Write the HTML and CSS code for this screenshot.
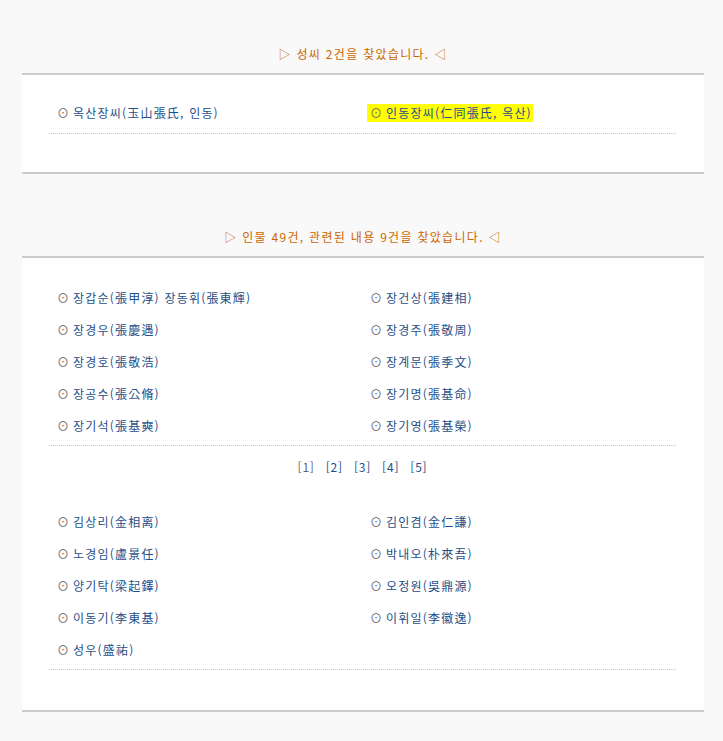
FILE: index.html
```html
<!DOCTYPE html>
<html lang="ko">
<head>
    <meta charset="UTF-8">
    <meta name="viewport" content="width=device-width, initial-scale=1.0">
    <title>검색 결과</title>
    <link rel="stylesheet" href="styles.css">
</head>
<body>
    <div class="wrap">
        <!-- 성씨 결과 -->
        <section class="result">
            <h2 class="result-title">▷ 성씨 2건을 찾았습니다. ◁</h2>
            <div class="panel">
                <ul class="list">
                    <li><a href="#"><span class="dot">⊙</span>옥산장씨(玉山張氏, 인동)</a></li>
                    <li><a href="#" class="hl"><span class="dot">⊙</span>인동장씨(仁同張氏, 옥산)</a></li>
                </ul>
            </div>
        </section>

        <!-- 인물 결과 -->
        <section class="result second">
            <h2 class="result-title">▷ 인물 49건, 관련된 내용 9건을 찾았습니다. ◁</h2>
            <div class="panel">
                <ul class="list">
                    <li><a href="#"><span class="dot">⊙</span>장갑순(張甲淳) 장동휘(張東輝)</a></li>
                    <li><a href="#"><span class="dot">⊙</span>장건상(張建相)</a></li>
                    <li><a href="#"><span class="dot">⊙</span>장경우(張慶遇)</a></li>
                    <li><a href="#"><span class="dot">⊙</span>장경주(張敬周)</a></li>
                    <li><a href="#"><span class="dot">⊙</span>장경호(張敬浩)</a></li>
                    <li><a href="#"><span class="dot">⊙</span>장계문(張季文)</a></li>
                    <li><a href="#"><span class="dot">⊙</span>장공수(張公脩)</a></li>
                    <li><a href="#"><span class="dot">⊙</span>장기명(張基命)</a></li>
                    <li><a href="#"><span class="dot">⊙</span>장기석(張基奭)</a></li>
                    <li><a href="#"><span class="dot">⊙</span>장기영(張基榮)</a></li>
                </ul>
                <div class="paging">
                    <span class="cur">[1]</span>
                    <a href="#">[2]</a>
                    <a href="#">[3]</a>
                    <a href="#">[4]</a>
                    <a href="#">[5]</a>
                </div>
                <ul class="list related">
                    <li><a href="#"><span class="dot">⊙</span>김상리(金相离)</a></li>
                    <li><a href="#"><span class="dot">⊙</span>김인겸(金仁謙)</a></li>
                    <li><a href="#"><span class="dot">⊙</span>노경임(盧景任)</a></li>
                    <li><a href="#"><span class="dot">⊙</span>박내오(朴來吾)</a></li>
                    <li><a href="#"><span class="dot">⊙</span>양기탁(梁起鐸)</a></li>
                    <li><a href="#"><span class="dot">⊙</span>오정원(吳鼎源)</a></li>
                    <li><a href="#"><span class="dot">⊙</span>이동기(李東基)</a></li>
                    <li><a href="#"><span class="dot">⊙</span>이휘일(李徽逸)</a></li>
                    <li><a href="#"><span class="dot">⊙</span>성우(盛祐)</a></li>
                </ul>
            </div>
        </section>
    </div>
</body>
</html>
```

FILE: styles.css
```css
body {
    margin: 0;
    padding: 0;
    background-color: #f9f9f9;
    font-family: "Noto Sans CJK KR", "Noto Sans", sans-serif;
    font-size: 12px;
}

.wrap {
    width: 682px;
    margin-left: 22px;
}

.result-title {
    margin: 0;
    padding-top: 45px;
    padding-bottom: 10px;
    height: 18px;
    line-height: 18px;
    text-align: center;
    font-size: 12px;
    font-weight: normal;
    letter-spacing: 1.3px;
    color: #cc6600;
}

.second .result-title {
    padding-top: 54px;
}

.panel {
    background-color: #fff;
    border-top: 2px solid #cccccc;
    border-bottom: 2px solid #cccccc;
    padding: 22px 28px 38px 27px;
}

.second .panel {
    padding-top: 24px;
    padding-bottom: 40px;
}

.list {
    list-style: none;
    margin: 0;
    padding: 0 0 4px 8px;
    display: grid;
    grid-template-columns: 313px 1fr;
    border-bottom: 1px dotted #c4c4c4;
}

.second .list {
    padding-bottom: 3px;
}

.list li {
    height: 32px;
    display: flex;
    align-items: center;
}

.list a {
    color: #1f4f88;
    text-decoration: none;
    line-height: 18px;
    letter-spacing: 1.2px;
}

.list a.hl {
    background-color: #ffff00;
    padding: 0 1px 0 3px;
    margin-left: -3px;
}

.dot {
    color: #666;
    margin-right: 4px;
    letter-spacing: 0;
}

.paging {
    margin-top: 11px;
    height: 20px;
    line-height: 20px;
    display: flex;
    justify-content: center;
    gap: 11px;
}

.paging a,
.paging .cur {
    color: #1f4f88;
    text-decoration: none;
    letter-spacing: 0.8px;
}

.paging .cur {
    color: #666;
}

.related {
    margin-top: 29px;
}
```
